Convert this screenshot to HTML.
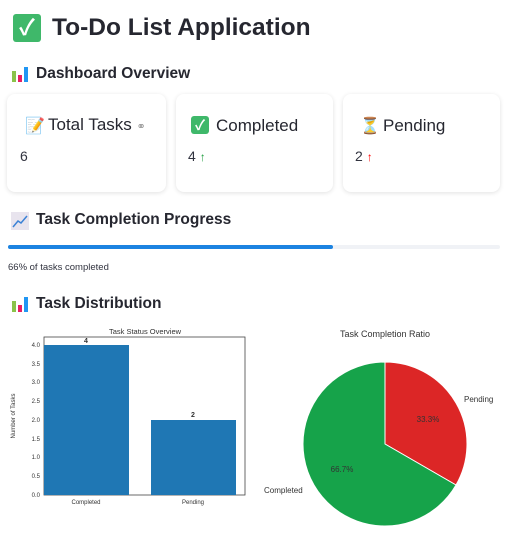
<!DOCTYPE html>
<html><head><meta charset="utf-8"><style>
*{margin:0;padding:0;box-sizing:border-box}
body{width:509px;height:536px;background:#fff;font-family:"Liberation Sans","Noto Sans CJK SC",sans-serif;color:#31333f;position:relative;overflow:hidden}
.a{position:absolute;white-space:nowrap}
.ic{display:inline-block;vertical-align:middle;border-radius:3px}
.card{position:absolute;top:94px;height:98px;background:#fff;border-radius:8px;box-shadow:0 1px 5px rgba(0,0,0,.12)}
h1{font-size:24.5px;font-weight:bold}
h3{font-size:15.5px;font-weight:bold;color:#262730}
</style></head><body>
<div class="a" style="left:13px;top:14px"><span class="ic" style="width:28px;height:28px;background:#3fb86a;color:#fff;font-size:22px;line-height:28px;text-align:center;font-weight:bold">✓</span></div>
<h1 class="a" style="left:52px;top:14px;color:#262730">To-Do List Application</h1>

<div class="a" style="left:11px;top:65px"><svg width="18" height="18"><rect x="1" y="6" width="4" height="11" fill="#8bc34a"/><rect x="7" y="10" width="4" height="7" fill="#e91e63"/><rect x="13" y="2" width="4" height="15" fill="#2196f3"/></svg></div>
<h3 class="a" style="left:36px;top:65px">Dashboard Overview</h3>

<div class="card" style="left:7px;width:159px"></div>
<div class="card" style="left:176px;width:157px"></div>
<div class="card" style="left:343px;width:157px"></div>
<div class="a" style="left:25px;top:116px;font-size:16px">📝</div>
<div class="a" style="left:48px;top:115px;font-size:17px;color:#262730">Total Tasks <span style="font-size:11px;color:#999">⚭</span></div>
<div class="a" style="left:20px;top:148px;font-size:14px">6</div>
<div class="a" style="left:191px;top:116px"><span class="ic" style="width:18px;height:18px;background:#3fb86a;color:#fff;font-size:14px;line-height:18px;text-align:center;font-weight:bold">✓</span></div>
<div class="a" style="left:216px;top:116px;font-size:17px;color:#262730">Completed</div>
<div class="a" style="left:188px;top:148px;font-size:14px">4 <span style="color:#1a9b3a;font-size:12px">↑</span></div>
<div class="a" style="left:360px;top:116px;font-size:16px;color:#d4a04b">⏳</div>
<div class="a" style="left:383px;top:116px;font-size:17px;color:#262730">Pending</div>
<div class="a" style="left:355px;top:148px;font-size:14px">2 <span style="color:#f00;font-size:12px">↑</span></div>

<div class="a" style="left:11px;top:212px"><svg width="18" height="18"><rect width="18" height="18" fill="#e8e4ee"/><polyline points="2,15 7,9 10,11 16,4" stroke="#3b82d6" stroke-width="1.5" fill="none"/></svg></div>
<h3 class="a" style="left:36px;top:211px">Task Completion Progress</h3>
<div class="a" style="left:8px;top:245px;width:492px;height:4px;background:#f0f2f6;border-radius:2px"></div>
<div class="a" style="left:8px;top:245px;width:325px;height:4px;background:#1c83e1;border-radius:2px"></div>
<div class="a" style="left:8px;top:262px;font-size:9.5px">66% of tasks completed</div>

<div class="a" style="left:11px;top:295px"><svg width="18" height="18"><rect x="1" y="6" width="4" height="11" fill="#8bc34a"/><rect x="7" y="10" width="4" height="7" fill="#e91e63"/><rect x="13" y="2" width="4" height="15" fill="#2196f3"/></svg></div>
<h3 class="a" style="left:36px;top:295px">Task Distribution</h3>

<svg class="a" style="left:0;top:320px" width="509" height="216" font-family="Liberation Sans,sans-serif" fill="#333">
<text x="145" y="14" font-size="7.5" text-anchor="middle">Task Status Overview</text>
<rect x="44" y="17" width="201" height="158" fill="none" stroke="#444" stroke-width=".8"/>
<rect x="44" y="25" width="85" height="150" fill="#1f77b4"/>
<rect x="151" y="100" width="85" height="75" fill="#1f77b4"/>
<text x="86" y="23" font-size="7" text-anchor="middle" font-weight="bold">4</text>
<text x="193" y="97" font-size="7" text-anchor="middle" font-weight="bold">2</text>
<g font-size="6" text-anchor="end">
<text x="40" y="177">0.0</text><text x="40" y="158">0.5</text><text x="40" y="139">1.0</text><text x="40" y="121">1.5</text><text x="40" y="102">2.0</text><text x="40" y="83">2.5</text><text x="40" y="64">3.0</text><text x="40" y="46">3.5</text><text x="40" y="27">4.0</text>
</g>
<text x="86" y="184" font-size="6" text-anchor="middle">Completed</text>
<text x="193" y="184" font-size="6" text-anchor="middle">Pending</text>
<text transform="translate(15,96) rotate(-90)" font-size="6" text-anchor="middle">Number of Tasks</text>
<text x="385" y="17" font-size="9" text-anchor="middle">Task Completion Ratio</text>
<path d="M385,124 L385,42 A82,82 0 0 1 456,165 Z" fill="#dc2626" stroke="#fff" stroke-width="1"/>
<path d="M385,124 L456,165 A82,82 0 1 1 385,42 Z" fill="#16a34a" stroke="#fff" stroke-width="1"/>
<text x="428" y="102" font-size="8" text-anchor="middle">33.3%</text>
<text x="342" y="152" font-size="8" text-anchor="middle">66.7%</text>
<text x="464" y="82" font-size="8">Pending</text>
<text x="264" y="173" font-size="8">Completed</text>
</svg>
</body></html>
